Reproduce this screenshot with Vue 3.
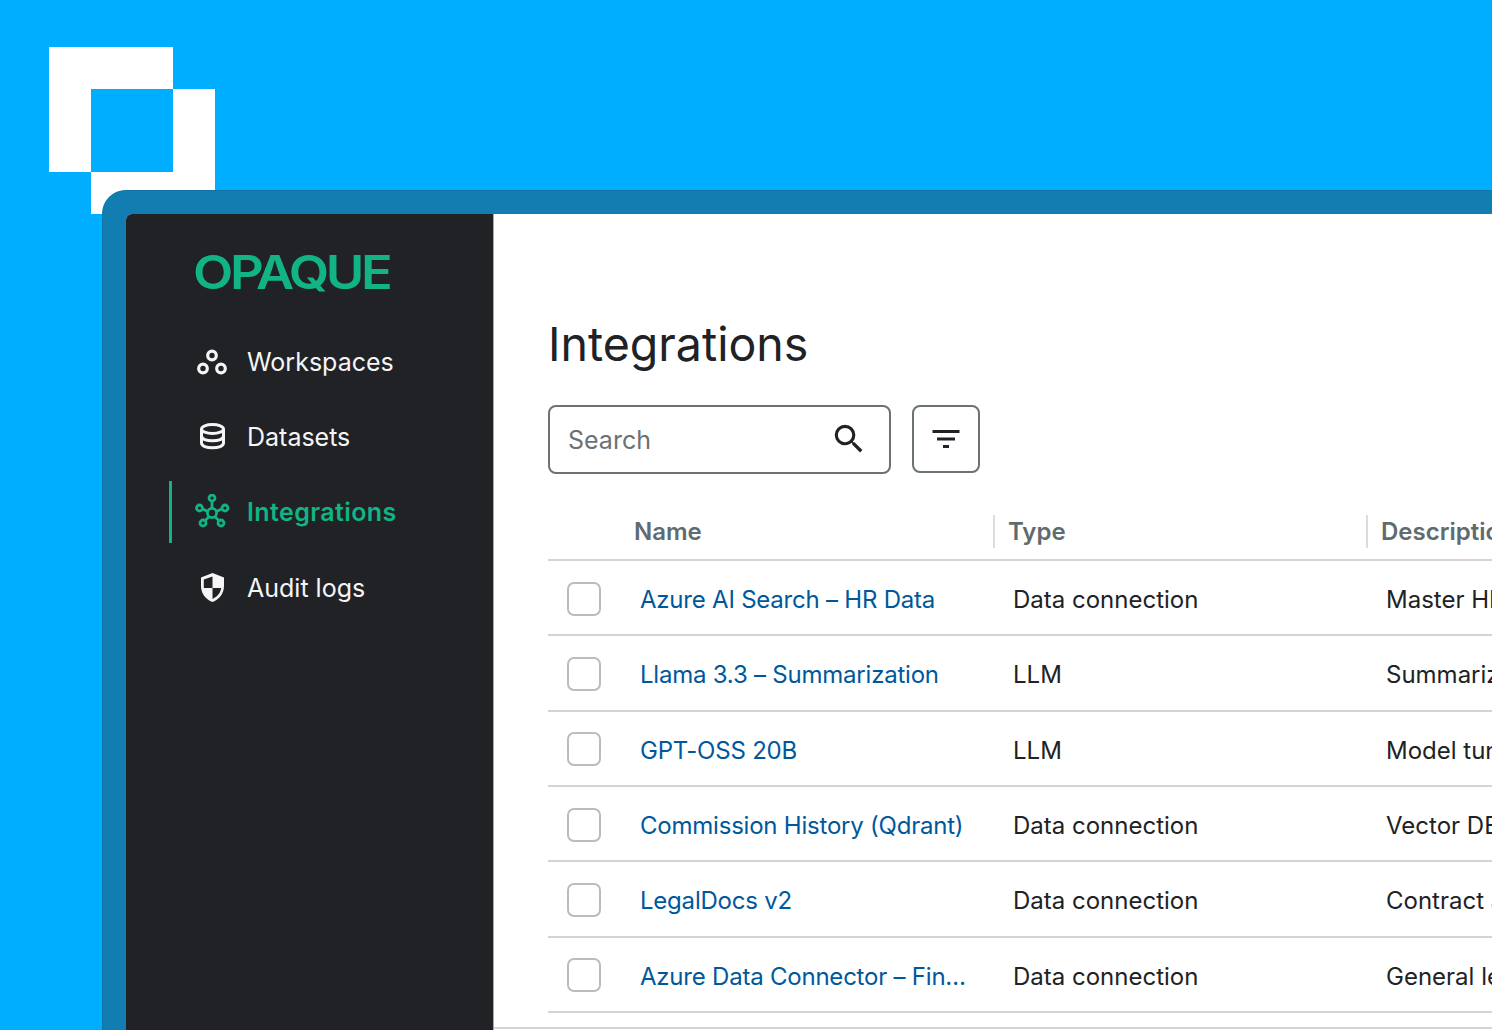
<script setup>
const nav = [
  { label: 'Workspaces', icon: 'workspaces' },
  { label: 'Datasets', icon: 'datasets' },
  { label: 'Integrations', icon: 'integrations', active: true },
  { label: 'Audit logs', icon: 'audit' },
]
const rows = [
  { name: 'Azure AI Search – HR Data', type: 'Data connection', desc: 'Master HR policy documents' },
  { name: 'Llama 3.3 – Summarization', type: 'LLM', desc: 'Summarization model' },
  { name: 'GPT-OSS 20B', type: 'LLM', desc: 'Model tuned for agents' },
  { name: 'Commission History (Qdrant)', type: 'Data connection', desc: 'Vector DB of commissions' },
  { name: 'LegalDocs v2', type: 'Data connection', desc: 'Contract archive' },
  { name: 'Azure Data Connector – Fin…', type: 'Data connection', desc: 'General ledger data' },
]
</script>

<template>
  <div class="page">
    <svg class="mark" width="166" height="167" viewBox="0 0 166 167">
      <path fill="#fff" fill-rule="evenodd" d="M0 0H124V42H166V167H42V125H0ZM42 42V125H124V42Z" />
    </svg>
    <div class="frame">
      <div class="panel">
        <aside class="sidebar">
          <div class="brand"><span>OPAQUE</span></div>
          <nav class="nav">
            <div v-for="item in nav" :key="item.label" class="nav-item" :class="{ active: item.active }">
              <svg class="nav-icon" width="36" height="36" viewBox="0 0 36 36">
                <g v-if="item.icon === 'workspaces'" fill="none" stroke="currentColor" stroke-width="3.200">
                  <circle cx="18" cy="11.500" r="4.300" />
                  <circle cx="9" cy="24.500" r="4.300" />
                  <circle cx="27" cy="24.500" r="4.300" />
                </g>
                <g v-else-if="item.icon === 'datasets'" fill="none" stroke="currentColor" stroke-width="3">
                  <ellipse cx="18.500" cy="10" rx="11" ry="4.500" />
                  <path d="M7.500 10V24C7.500 27 12.500 28.800 18.500 28.800S29.500 27 29.500 24V10" />
                  <path d="M7.500 17C7.500 20 12.500 21.800 18.500 21.800S29.500 20 29.500 17" />
                </g>
                <g v-else-if="item.icon === 'integrations'" fill="none" stroke="currentColor" stroke-width="2.800">
                  <circle cx="18" cy="19" r="4.600" />
                  <circle cx="18" cy="4" r="3" />
                  <circle cx="5.500" cy="14" r="3" />
                  <circle cx="31" cy="14" r="3" />
                  <circle cx="9" cy="29" r="3" />
                  <circle cx="27" cy="29" r="3" />
                  <path d="M18 7V14.400M8.500 14.800L13.600 17.500M28 14.800L22.400 17.500M11 26.700L15.200 22.600M25 26.700L20.800 22.600" />
                </g>
                <g v-else>
                  <path fill="currentColor" fill-rule="evenodd" d="M18.500 3L30 7.500V16C30 23.500 25.200 29.500 18.500 32C11.800 29.500 7 23.500 7 16V7.500ZM18.500 6.500V18H9.800V9.500ZM18.500 18H27.200C26.500 23 23.200 27 18.500 28.900Z" />
                </g>
              </svg>
              <span>{{ item.label }}</span>
            </div>
          </nav>
        </aside>
        <main class="main">
          <h1 class="title">Integrations</h1>
          <div class="toolbar">
            <div class="search">
              <span>Search</span>
              <svg class="search-icon" width="38" height="38" viewBox="0 0 24 24"><path fill="#202225" d="M15.500 14h-.79l-.28-.27A6.470 6.470 0 0 0 16 9.500 6.500 6.500 0 1 0 9.500 16c1.610 0 3.090-.59 4.230-1.570l.27.28v.79l5 4.990L20.490 19zm-6 0C7.010 14 5 11.990 5 9.500S7.010 5 9.500 5 14 7.010 14 9.500 11.990 14 9.500 14z" /></svg>
            </div>
            <div class="filter">
              <svg width="36" height="36" viewBox="0 0 24 24"><path fill="#202225" d="M10 18h4v-2h-4zM3 6v2h18V6zm3 7h12v-2H6z" /></svg>
            </div>
          </div>
          <div class="table">
            <div class="head">
              <div class="th first">Name</div>
              <div class="th">Type</div>
              <div class="th">Description</div>
            </div>
            <div v-for="row in rows" :key="row.name" class="row">
              <div class="check-cell"><span class="check"></span></div>
              <a class="name">{{ row.name }}</a>
              <div class="cell">{{ row.type }}</div>
              <div class="cell desc">{{ row.desc }}</div>
            </div>
          </div>
          <div class="foot"></div>
        </main>
      </div>
    </div>
  </div>
</template>

<style>
html, body { margin: 0; background: #00aeff; }
</style>

<style scoped>
.page {
  position: relative;
  width: 1492px;
  height: 1030px;
  padding: 190px 0 0 102px;
  box-sizing: border-box;
  overflow: hidden;
  background: #00aeff;
  font-family: Inter, "Liberation Sans", sans-serif;
}
.mark { position: absolute; left: 49px; top: 47px; }
.frame {
  position: relative;
  height: 840px;
  padding: 23px 0 0 23px;
  box-sizing: border-box;
  background: #127db0;
  border-top: 1px solid #0f74a5;
  border-left: 1px solid #0f74a5;
  border-top-left-radius: 24px;
}
.panel {
  display: flex;
  height: 816px;
  background: #fff;
  border-top-left-radius: 6px;
  overflow: hidden;
}
.sidebar {
  flex: 0 0 368px;
  background: #202225;
  border-right: 1px solid #aaa;
  box-sizing: border-box;
  padding-top: 30px;
}
.brand {
  margin-left: 67px;
  height: 56px;
  font-size: 46px;
  line-height: 56px;
  font-weight: 600;
  letter-spacing: -3px;
  color: #12b384;
}
.brand span {
  display: inline-block;
  transform: scaleX(1.14);
  transform-origin: left center;
}
.nav { margin-top: 24px; display: flex; flex-direction: column; }
.nav-item {
  display: flex;
  align-items: center;
  gap: 17px;
  height: 75.330px;
  padding-left: 68px;
  color: #f5f5f5;
  font-size: 25px;
}
.nav-item.active {
  position: relative;
  color: #12b384;
  font-weight: 600;
  letter-spacing: 0.400px;
}
.nav-item.active::before {
  content: "";
  position: absolute;
  left: 43px;
  top: 6px;
  width: 3px;
  height: 62px;
  background: #12b384;
}
.main {
  flex: 1;
  min-width: 0;
  padding: 100px 0 0 54px;
  color: #202225;
}
.title {
  margin: 0;
  height: 60px;
  font-size: 46.500px;
  line-height: 60px;
  font-weight: 400;
}
.toolbar { display: flex; gap: 21px; margin-top: 31px; }
.search {
  display: flex;
  align-items: center;
  justify-content: space-between;
  width: 343px;
  height: 69px;
  padding: 0 21px 0 18px;
  box-sizing: border-box;
  border: 2px solid #6a7275;
  border-radius: 8px;
  font-size: 25px;
  color: #6a7275;
}
.search-icon { margin-bottom: 2px; }
.filter {
  display: flex;
  align-items: center;
  justify-content: center;
  width: 68px;
  height: 68px;
  box-sizing: border-box;
  border: 2px solid #6a7275;
  border-radius: 8px;
}
.table { margin-top: 28px; }
.head {
  display: grid;
  grid-template-columns: 445px 373px 1fr;
  height: 59px;
  box-sizing: border-box;
  border-bottom: 2px solid #d4d4d4;
  padding-top: 13px;
}
.th {
  height: 33px;
  line-height: 33px;
  padding-left: 13px;
  border-left: 2px solid #dcdcdc;
  font-size: 24px;
  font-weight: 600;
  color: #5f6b6e;
  white-space: nowrap;
}
.th.first { border-left: 0; padding-left: 86px; }
.row {
  display: grid;
  grid-template-columns: 92px 373px 373px 1fr;
  align-items: center;
  height: 75.330px;
  padding-top: 2px;
  box-sizing: border-box;
  border-bottom: 2px solid #d4d4d4;
  font-size: 24px;
  white-space: nowrap;
}
.check-cell { padding-left: 19px; display: flex; }
.check {
  width: 34px;
  height: 34px;
  box-sizing: border-box;
  border: 2px solid #bcbcbc;
  border-radius: 7px;
}
.name { color: #00589c; letter-spacing: -0.220px; padding-top: 2px; }
.cell { color: #202225; padding-top: 2px; }
.foot {
  margin: 14px 0 0 -54px;
  height: 2px;
  background: #d4d4d4;
}
</style>
